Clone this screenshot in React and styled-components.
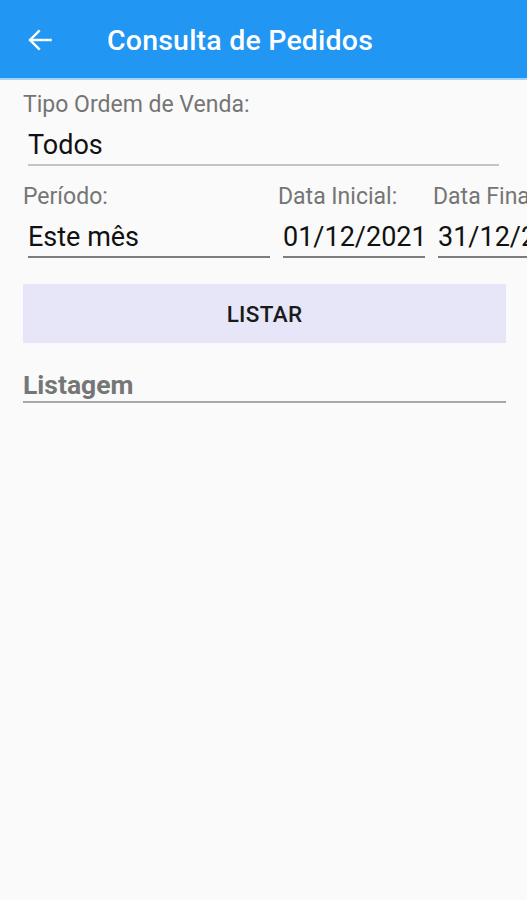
import React from 'react';
import styled, { createGlobalStyle } from 'styled-components';

const GlobalStyle = createGlobalStyle`
  body {
    margin: 0;
    background-color: #fafafa;
    font-family: Roboto, "Liberation Sans", sans-serif;
    overflow: hidden;
  }
`;

const Screen = styled.div`
  width: 527px;
  height: 900px;
  overflow: hidden;
  background-color: #fafafa;
`;

const AppBar = styled.header`
  height: 78px;
  background-color: #2196f3;
  border-bottom: 2px solid #9fd3fa;
  display: flex;
  align-items: center;
`;

const BackButton = styled.div`
  width: 28px;
  height: 28px;
  margin: 2px 0 0 26px;
  display: flex;
  align-items: center;
  justify-content: center;
`;

const Title = styled.h1`
  margin: 2px 0 0 53px;
  color: #fff;
  font-size: 28.5px;
  font-weight: 500;
  letter-spacing: 0.2px;
`;

const Content = styled.div`
  padding: 11px 21px 0 23px;
`;

const FieldRow = styled.div`
  display: flex;
  gap: 8px;
  width: 640px;
  margin-bottom: ${(p) => p.$mb || 0}px;
`;

const Field = styled.div`
  width: ${(p) => p.$w}px;
  flex: none;
`;

const Label = styled.div`
  color: #757575;
  font-size: 23px;
  line-height: 28px;
  white-space: nowrap;
`;

const Value = styled.div`
  margin: 10px 0 0 5px;
  padding-bottom: 3px;
  color: #111;
  font-size: 27px;
  line-height: 32px;
  white-space: nowrap;
  border-bottom: 2px solid ${(p) => (p.$muted ? '#c4c4c4' : '#7d7d7d')};
`;

const ListButton = styled.button`
  display: block;
  width: 483px;
  height: 59px;
  margin-top: 26px;
  border: none;
  background-color: #e6e6f8;
  color: #1a1a1a;
  font-family: Roboto, "Liberation Sans", sans-serif;
  font-size: 22.5px;
  font-weight: 500;
  letter-spacing: 0.3px;
`;

const SectionTitle = styled.div`
  width: 483px;
  margin-top: 26px;
  color: #767676;
  font-size: 26.5px;
  font-weight: 700;
  line-height: 32px;
  border-bottom: 2px solid #a8a8a8;
`;

const BackArrow = () => (
  <svg width="28" height="28" viewBox="0 0 24 24" fill="none" stroke="#fff" strokeWidth="2.1" strokeLinecap="square">
    <path d="M21 12H4" />
    <path d="M11 4.5L3.5 12L11 19.5" />
  </svg>
);

export default function App() {
  return (
    <Screen>
      <GlobalStyle />
      <AppBar>
        <BackButton>
          <BackArrow />
        </BackButton>
        <Title>Consulta de Pedidos</Title>
      </AppBar>
      <Content>
        <FieldRow $mb={17}>
          <Field $w={476}>
            <Label>Tipo Ordem de Venda:</Label>
            <Value $muted>Todos</Value>
          </Field>
        </FieldRow>
        <FieldRow>
          <Field $w={247}>
            <Label>Período:</Label>
            <Value>Este mês</Value>
          </Field>
          <Field $w={147}>
            <Label>Data Inicial:</Label>
            <Value>01/12/2021</Value>
          </Field>
          <Field $w={147}>
            <Label>Data Final:</Label>
            <Value>31/12/2021</Value>
          </Field>
        </FieldRow>
        <ListButton>LISTAR</ListButton>
        <SectionTitle>Listagem</SectionTitle>
      </Content>
    </Screen>
  );
}
